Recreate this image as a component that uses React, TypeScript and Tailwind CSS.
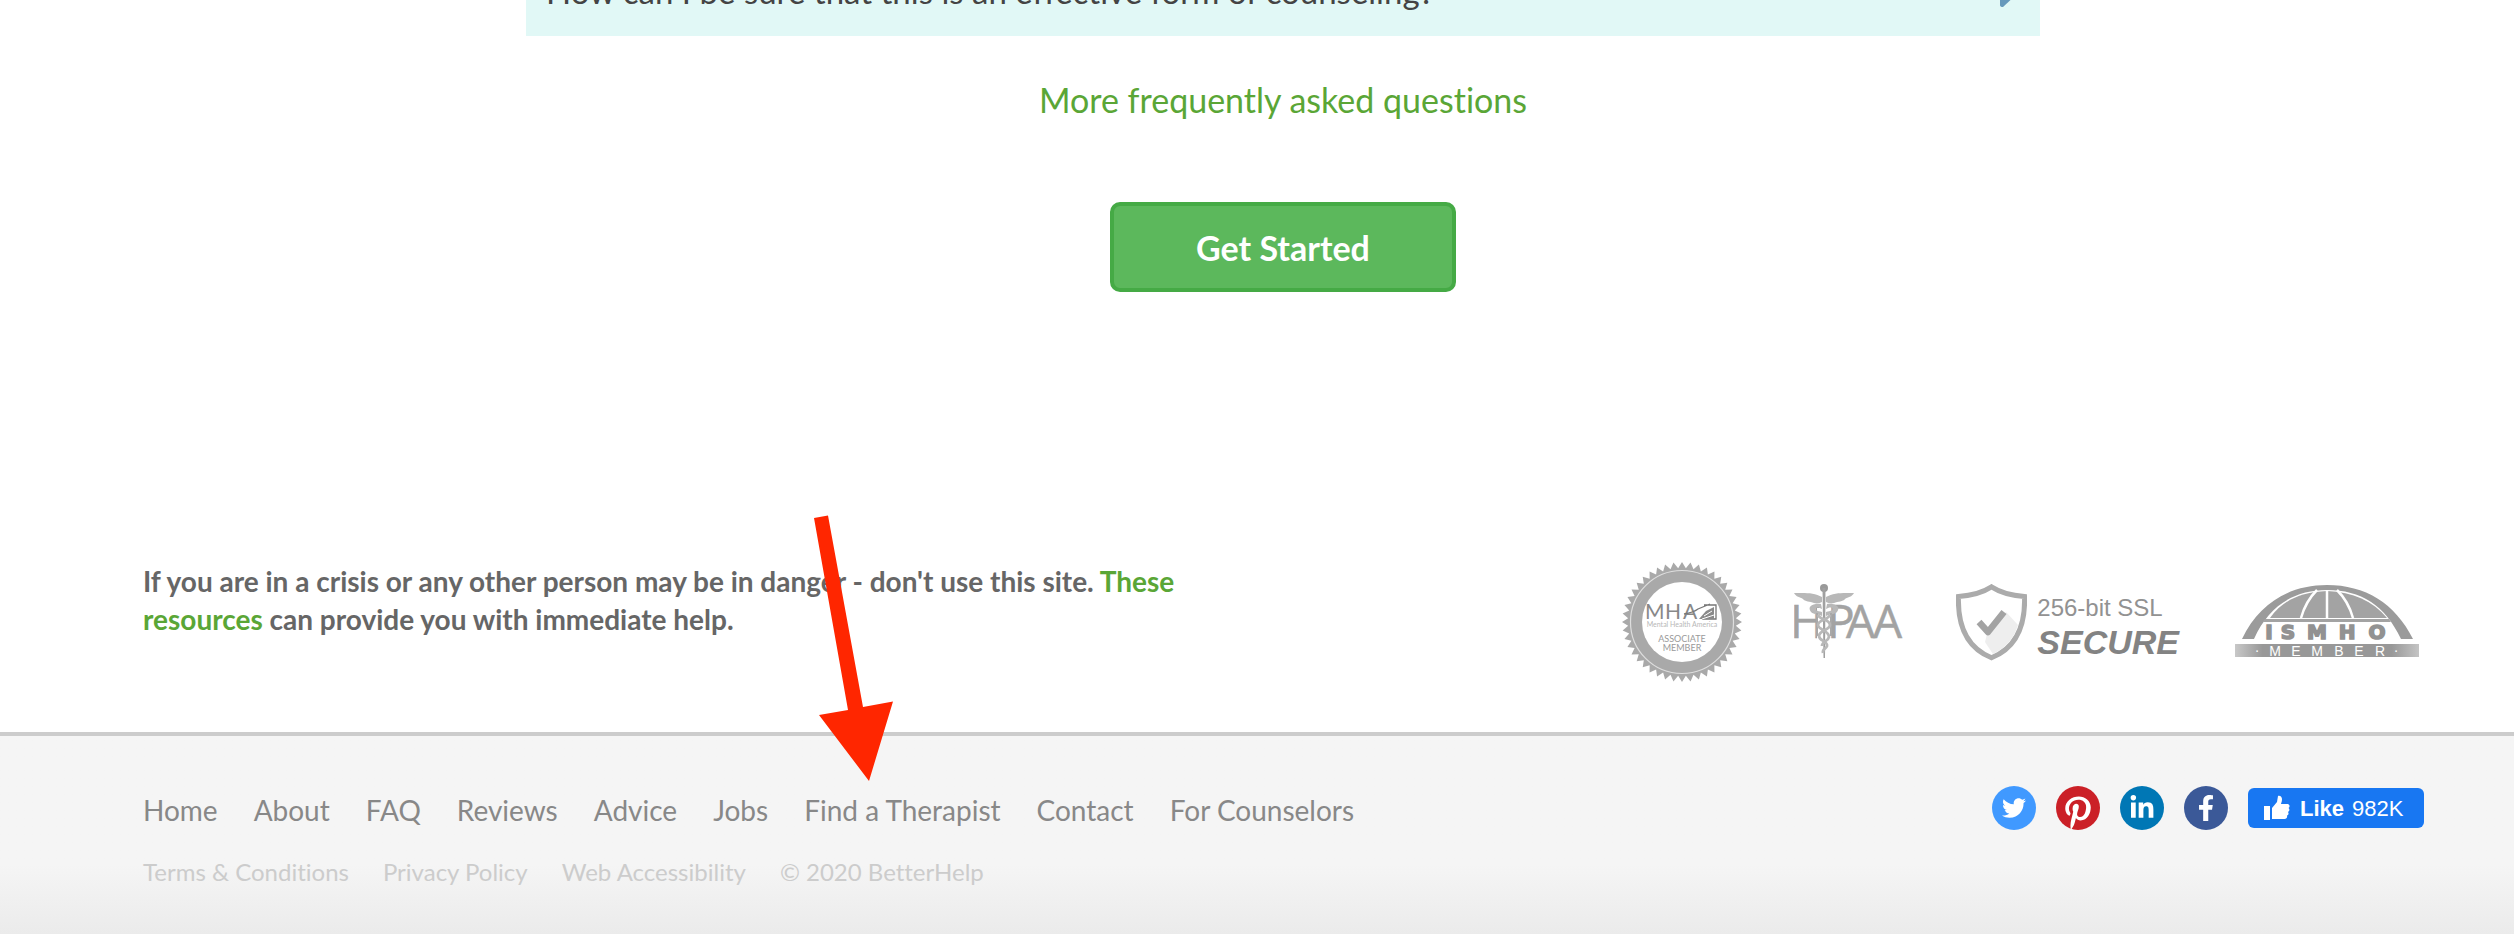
import React from "react";
import { FaFacebookF, FaLinkedinIn, FaPinterestP, FaTwitter } from "react-icons/fa";

const primaryLinks = ["Home", "About", "FAQ", "Reviews", "Advice", "Jobs", "Find a Therapist", "Contact", "For Counselors"];
const legalLinks = ["Terms & Conditions", "Privacy Policy", "Web Accessibility"];

function sealPoints() {
  const teeth = 44;
  const points: string[] = [];
  for (let i = 0; i < teeth * 2; i++) {
    const radius = i % 2 === 0 ? 60 : 54;
    const angle = (Math.PI * i) / teeth - Math.PI / 2;
    points.push(`${(60 + radius * Math.cos(angle)).toFixed(2)},${(60 + radius * Math.sin(angle)).toFixed(2)}`);
  }
  return points.join(" ");
}

function MhaBadge() {
  return (
    <svg width="120" height="120" viewBox="0 0 120 120" role="img" aria-label="Mental Health America associate member">
      <polygon points={sealPoints()} fill="#a9a9a9" />
      <circle cx="60" cy="60" r="51.5" fill="none" stroke="#dedede" strokeWidth="1.2" />
      <circle cx="60" cy="60" r="40" fill="#fff" />
      <g fontFamily="Lato, sans-serif" fill="#9a9a9a">
        <text x="23" y="57" fontSize="21" fontWeight="400" fill="#888">M</text>
        <text x="43" y="57" fontSize="21" fontWeight="400" fill="#888">H</text>
        <text x="61" y="57" fontSize="21" fontWeight="400" fill="#888">A</text>
        <text x="60" y="65" fontSize="7" textAnchor="middle" fill="#b8b8b8">Mental Health America</text>
        <text x="60" y="80" fontSize="9" textAnchor="middle">ASSOCIATE</text>
        <text x="60" y="89" fontSize="9" textAnchor="middle">MEMBER</text>
      </g>
      <path d="M62 52 C68 51 72 50 76 47 L88 42 M82 43 H94 V57 H80" fill="none" stroke="#777" strokeWidth="1.3" />
      <path d="M77 57 L84 49 L92 45 V57 Z" fill="#8a8a8a" />
      <path d="M82 54 L90 49 M80 57 L92 53" stroke="#fff" strokeWidth="1" />
    </svg>
  );
}

function HipaaBadge() {
  return (
    <svg width="110" height="76" viewBox="0 0 110 76" role="img" aria-label="HIPAA">
      <g fontFamily="'Open Sans', sans-serif" fontSize="46" fill="#a3a3a3" stroke="#a3a3a3" strokeWidth="0.5">
        <text x="-4" y="54">H</text>
        <text x="33" y="54">P</text>
        <text x="52" y="54">A</text>
        <text x="79" y="54">A</text>
      </g>
      <path d="M23 24 H37 V56 L34 66 L30 74 L26 66 L23 56 Z" fill="#fff" />
      <g fill="#b8b8b8">
        <path d="M28 13 C20 8 9 9 0 9 C2 13 6 13 9 15 C11 18 16 17 20 19 C23 20 26 19 28 18 Z" />
        <path d="M32 13 C40 8 51 9 60 9 C58 13 54 13 51 15 C49 18 44 17 40 19 C37 20 34 19 32 18 Z" />
        <path d="M27 20 C18 19 13 23 17 28 C20 31 25 30 28 32 V28 C23 27 20 26 22 24 C24 23 26 24 28 25 Z" />
        <path d="M33 20 C42 19 47 23 43 28 C40 31 35 30 32 32 V28 C37 27 40 26 38 24 C36 23 34 24 32 25 Z" />
      </g>
      <circle cx="30" cy="4" r="4" fill="#999" />
      <path d="M28.500 4 H31.500 L31 74 H29.500 Z" fill="#a0a0a0" />
      <path d="M23 29 V52 M37 29 V52" stroke="#a8a8a8" strokeWidth="2" fill="none" />
      <path d="M24 31 C26 36 36 35 36 41 C36 46 25 46 25 52 C25 57 34 57 33 62 C32 65 28 65 29 69 M36 31 C34 36 24 36 24 41 C24 46 35 46 35 53 C34 58 28 57 28 62" stroke="#b8b8b8" strokeWidth="2.800" fill="none" />
    </svg>
  );
}

function SecureBadge() {
  return (
    <div className="flex items-center gap-2.5 pr-1">
      <svg width="71" height="77" viewBox="0 0 71 77" aria-hidden="true">
        <path d="M35.500 2.800 C45 9 56 11.500 68.500 12.500 C69.500 40 62 63 35.500 73.800 C9 63 1.500 40 2.500 12.500 C15 11.500 26 9 35.500 2.800 Z" fill="#fff" stroke="#ababab" strokeWidth="5" />
        <path d="M50 28 L62 41 C58 54 50 64 37 70 L29 58 L31 50 Z" fill="#eee" />
        <path d="M23 38 L32 48 L48 28" fill="none" stroke="#a3a3a3" strokeWidth="6.500" strokeLinejoin="round" />
      </svg>
      <div className="pt-2 font-['Liberation_Sans',sans-serif]">
        <p className="text-2xl leading-8 text-[#929292]">256-bit SSL</p>
        <p className="text-[34px] leading-9 font-bold text-[#838383] italic">SECURE</p>
      </div>
    </div>
  );
}

function IsmhoBadge() {
  return (
    <svg width="184" height="74" viewBox="0 0 184 74" role="img" aria-label="ISMHO member">
      <defs>
        <linearGradient id="memberBar">
          <stop offset="0" stopColor="#c8c8c8" />
          <stop offset="0.15" stopColor="#989898" />
          <stop offset="0.85" stopColor="#989898" />
          <stop offset="1" stopColor="#c4c4c4" />
        </linearGradient>
      </defs>
      <path d="M7 54 C24 18 55 0 92 0 C130 0 160 18 178 54 H166 C150 20 126 5 92 5 C60 5 34 20 19 54 Z" fill="#9b9b9b" />
      <path d="M35 33 C48 15 66 7 92 6 C118 7 138 16 152 33 Z" fill="#a3a3a3" />
      <path d="M92 5 V33 M82 5 C74 13 69 22 66 33 M102 5 C110 13 115 22 118 33" stroke="#fff" strokeWidth="2.500" fill="none" />
      <path d="M30 34 H154 L156 37 H28 Z" fill="#a3a3a3" />
      <g fontFamily="'DejaVu Sans', sans-serif" fontWeight="700" fontSize="20" fill="#929292" stroke="#929292" strokeWidth="1.600" textAnchor="middle">
        <text x="34" y="54">I</text>
        <text x="53" y="54">S</text>
        <text x="82" y="54">M</text>
        <text x="112" y="54">H</text>
        <text x="142" y="54">O</text>
      </g>
      <rect x="0" y="59" width="184" height="13" fill="url(#memberBar)" />
      <g fontFamily="'Liberation Sans', sans-serif" fontSize="14" fill="#fff" textAnchor="middle">
        <text x="22" y="70">·</text>
        <text x="40" y="71">M</text>
        <text x="61" y="71">E</text>
        <text x="82" y="71">M</text>
        <text x="104" y="71">B</text>
        <text x="124" y="71">E</text>
        <text x="145" y="71">R</text>
        <text x="161" y="70">·</text>
      </g>
    </svg>
  );
}

function SocialLinks() {
  return (
    <div className="flex items-center gap-5">
      <a href="#twitter" aria-label="Twitter" className="flex size-11 items-center justify-center rounded-full bg-[#4099ff] text-white">
        <FaTwitter size={24} />
      </a>
      <a href="#pinterest" aria-label="Pinterest" className="flex size-11 items-end justify-center rounded-full bg-[#cb2027] text-white">
        <FaPinterestP size={34} />
      </a>
      <a href="#linkedin" aria-label="LinkedIn" className="flex size-11 items-center justify-center rounded-full bg-[#0077b5] text-white">
        <FaLinkedinIn size={26} />
      </a>
      <a href="#facebook" aria-label="Facebook" className="flex size-11 items-center justify-center rounded-full bg-[#3b5998] text-white">
        <FaFacebookF size={26} />
      </a>
      <button className="flex h-10 w-44 items-center rounded-md bg-[#1877f2] pl-4 font-['Liberation_Sans',sans-serif] text-[22px] text-white">
        <svg className="mr-2.5" width="26" height="26" viewBox="0 0 26 26" fill="currentColor" aria-hidden="true">
          <rect x="0" y="11" width="6" height="14" />
          <path d="M8 13 L13 7 L14 1 C15 0 18 1 18 4 C18 7 17 8 17 9 H24 C26 10 26 12 24.500 13 C26 14 25.500 16 24 17 C25 18.500 24.500 20 23 20.500 C23.500 22.500 22.500 24 20.500 24 H8 Z" />
        </svg>
        <strong className="mr-2">Like</strong>
        <span>982K</span>
      </button>
    </div>
  );
}

export default function App() {
  return (
    <div className="relative flex min-h-screen flex-col overflow-hidden bg-white font-[Lato,sans-serif] [font-variant-ligatures:no-common-ligatures]">
      <main className="flex flex-col items-center pl-[52px]">
        <button className="-mt-12 flex h-[84px] w-[1514px] max-w-full items-center justify-between bg-[#e1f8f6] pr-[22px] pb-1 pl-5 text-left text-[33px] text-[#444]">
          <span>How can I be sure that this is an effective form of counseling?</span>
          <svg width="18" height="30" viewBox="0 0 18 30" aria-hidden="true">
            <path d="M0 2 Q0 0 3 0 L18 14 V16 L3 30 Q0 30 0 28 Z" fill="#6699bb" />
          </svg>
        </button>
        <a href="#faq" className="mt-10 text-[34px] leading-[48px] text-[#5aa636]">
          More frequently asked questions
        </a>
        <button className="mt-[78px] h-[90px] w-[346px] rounded-[10px] border-4 border-[#45aa45] bg-[#5cb85c] text-[34px] font-bold text-white">
          Get Started
        </button>
      </main>

      <section className="mt-[270px] flex items-start justify-between pr-[95px] pb-[50px] pl-[143px]">
        <p className="w-[1060px] text-[28px] leading-[38px] font-bold text-[#666]">
          If you are in a crisis or any other person may be in danger - don't use this site.{" "}
          <a href="#resources" className="text-[#5aa636]">These resources</a> can provide you with immediate help.
        </p>
        <div className="flex items-center gap-[52px]">
          <MhaBadge />
          <HipaaBadge />
          <SecureBadge />
          <IsmhoBadge />
        </div>
      </section>

      <footer className="flex grow items-start justify-between border-t-4 border-[#ccc] bg-linear-to-b from-[#f5f5f5] from-65% to-[#ebebeb] pt-[50px] pr-[90px] pl-[143px]">
        <div>
          <nav className="flex gap-9 text-[28px] leading-[48px] text-[#888]">
            {primaryLinks.map((label) => (
              <a key={label} href="#top">{label}</a>
            ))}
          </nav>
          <div className="mt-5 flex gap-[34px] text-2xl leading-9 text-[#ccc]">
            {legalLinks.map((label) => (
              <a key={label} href="#legal">{label}</a>
            ))}
            <span>© 2020 BetterHelp</span>
          </div>
        </div>
        <SocialLinks />
      </footer>

      <svg className="pointer-events-none absolute top-[515px] left-[813px]" width="82" height="268" viewBox="0 0 82 268" aria-hidden="true">
        <path d="M1 3 L15 0.500 L50 192 L80 186.500 L56 266 L6 200 L35 195 Z" fill="#ff2600" />
      </svg>
    </div>
  );
}
